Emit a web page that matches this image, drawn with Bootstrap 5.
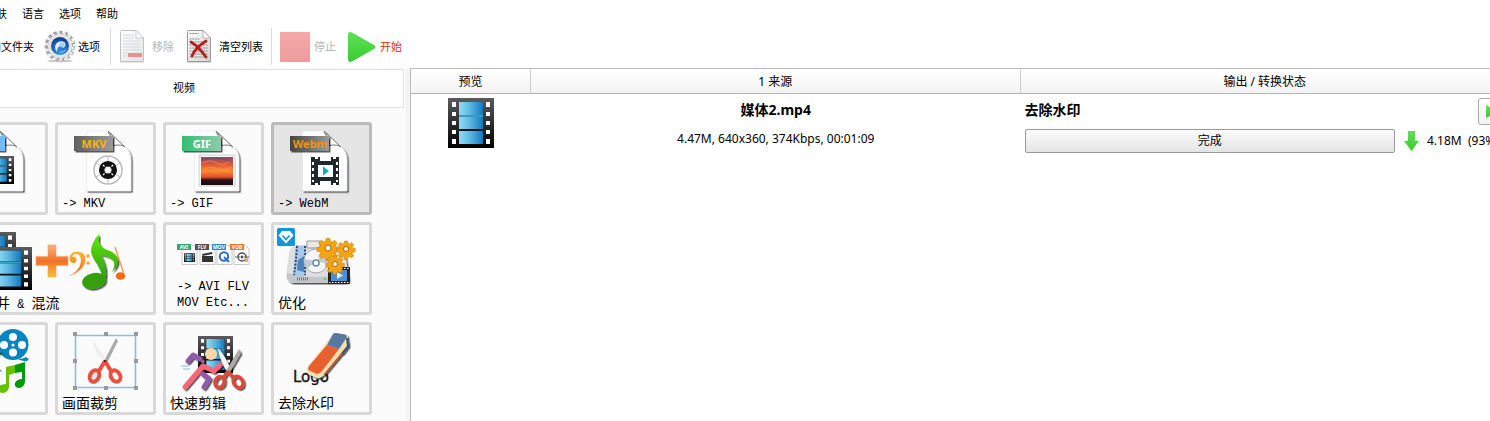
<!DOCTYPE html>
<html lang="zh-CN">
<head>
<meta charset="utf-8">
<meta name="viewport" content="width=device-width, initial-scale=1">
<title>视频转换</title>
<link rel="stylesheet" href="https://cdn.jsdelivr.net/npm/bootstrap@5.3.0/dist/css/bootstrap.min.css">
<style>
body{font-family:"Noto Sans","Noto Sans CJK SC",sans-serif;font-size:12px;line-height:16px;color:#000;background:#fff}
.app-menu{height:28px;margin-left:-15px;gap:15px;font-size:11px}
.app-menu a{color:#000;text-decoration:none}
.toolbar{height:40px;margin-left:-21px;font-size:11px;padding-bottom:3px}
.toolbar button{border:0;background:none;padding:0;display:flex;align-items:center;gap:4px;color:#000;white-space:nowrap}
.toolbar button:disabled{color:#b4b4b4}
.toolbar .settings{gap:2px;margin:0 2px 0 10px}
.toolbar .page-tool{gap:7px}
.toolbar .start{color:#dc2b14}
.tool-sep{width:1px;height:37px;background:#dcdcdc}
.side{width:406px;background:#fbfbfb;overflow:hidden}
.tab-strip{height:39px;margin:1px 2px 0 -36px;border:1px solid #e0e0e0;background:#fff;font-size:11px;padding-bottom:1px}
.tab-strip a{color:#000;text-decoration:none}
.splitter{width:4px;background:#f3f3f3}
.tiles{display:grid;grid-template-columns:repeat(4,101px);grid-auto-rows:93px;gap:7px;justify-content:end;padding:14px 34px 0 0}
.tile{border:3px solid #d8d8d8;border-radius:3px;background:#fbfbfb;padding:0;display:flex;flex-direction:column;text-align:left;color:#000;overflow:hidden}
.tile.active{background:#e5e5e5;border-color:#bbb}
.tile.wide{grid-column:span 2}
.tile svg{flex:none;width:95px;height:70px}
.tile.wide svg{width:203px}
.tile.tall-label svg{height:54px}
.tile-label{font:14px/14px "Noto Sans CJK SC",sans-serif;padding-left:4px;white-space:nowrap}
.latin{font-family:"Liberation Mono",monospace;font-size:12px;white-space:pre}
.tile-label.latin{line-height:18px}
.tall-label .tile-label{padding-left:11px;line-height:16px}
.list-pane{border-left:1px solid #bbb;border-top:1px solid #bbb;overflow:hidden;min-width:0}
.jobs{width:calc(100% + 20px);table-layout:fixed;border-collapse:separate;border-spacing:0}
.jobs th{height:25px;padding:2px 0 0;font-weight:400;text-align:center;background:linear-gradient(#fff,#f3f3f3);border-bottom:1px solid #b4b4b4;border-right:1px solid #ccc}
.jobs td{padding:4px;vertical-align:top}
.jobs .preview-col{width:120px}
.job-name{font-size:14px;font-weight:700;line-height:24px}
.job-line{height:28px;margin-top:3px}
.status-btn{height:24px;border:1px solid #9a9a9a;border-radius:2px;background:linear-gradient(#fcfcfc,#e4e4e4);padding:0}
.play-btn{width:28px;height:27px;border:1px solid #aaa;border-radius:3px;background:linear-gradient(#fff,#f3f3f3);padding:0 6px;display:flex;align-items:center}
.job-size{width:86px;white-space:pre;padding-left:7px}
</style>
</head>
<body class="vh-100 overflow-hidden d-flex flex-column">
<svg width="0" height="0" class="position-absolute" aria-hidden="true">
<defs>
<linearGradient id="dark" x2="0" y2="1"><stop stop-color="#5b5b5d"/><stop offset="1" stop-color="#000"/></linearGradient>
<linearGradient id="sky"><stop stop-color="#91dcf5"/><stop offset=".45" stop-color="#5eb8e2"/><stop offset="1" stop-color="#1478b9"/></linearGradient>
<linearGradient id="gray"><stop stop-color="#606060"/><stop offset="1" stop-color="#9a9a9a"/></linearGradient>
<linearGradient id="coal"><stop stop-color="#444"/><stop offset="1" stop-color="#999"/></linearGradient>
<linearGradient id="mint"><stop stop-color="#32be72"/><stop offset="1" stop-color="#8ecbab"/></linearGradient>
<linearGradient id="lightblue"><stop stop-color="#3f93df"/><stop offset="1" stop-color="#7dbdf5"/></linearGradient>
<linearGradient id="sunset" x2="0" y2="1"><stop stop-color="#8b4b62"/><stop offset=".25" stop-color="#d9563a"/><stop offset=".5" stop-color="#ff8a32"/><stop offset=".72" stop-color="#d9502d"/><stop offset=".82" stop-color="#2b1116"/><stop offset="1" stop-color="#150d12"/></linearGradient>
<linearGradient id="orange" x2="0" y2="1"><stop stop-color="#f9b27b"/><stop offset=".5" stop-color="#f0712a"/><stop offset="1" stop-color="#ffc02e"/></linearGradient>
<linearGradient id="clef" x2="0" y2="1"><stop stop-color="#fbb63a"/><stop offset="1" stop-color="#fa6210"/></linearGradient>
<linearGradient id="leaf" x2="0" y2="1"><stop stop-color="#5fe70b"/><stop offset="1" stop-color="#2c9b08"/></linearGradient>
<linearGradient id="paper" x2="1" y2="1"><stop stop-color="#fff"/><stop offset="1" stop-color="#d2d2d2"/></linearGradient>
<linearGradient id="go" x2="0" y2="1"><stop stop-color="#5ee05a"/><stop offset="1" stop-color="#3ccc30"/></linearGradient>
<linearGradient id="stopfill" x2="0" y2="1"><stop stop-color="#f7a8a8"/><stop offset="1" stop-color="#eb9c9c"/></linearGradient>
<radialGradient id="orb" cy=".85" r=".8"><stop stop-color="#3b98e4"/><stop offset="1" stop-color="#0a3f93"/></radialGradient>
<filter id="soft" x="-20%" y="-20%" width="150%" height="150%"><feDropShadow dx="1.5" dy="1.5" stdDeviation=".7" flood-opacity=".65"/></filter>
<symbol id="film" viewBox="0 0 46 50" preserveAspectRatio="none">
<path fill="url(#dark)" d="M0 0h46v50H0z"/><path fill="#111" d="M11 4h24v42H11z"/>
<path fill="url(#sky)" d="M11 4h24v13H11zM11 19h24v12H11zM11 33h24v13H11z"/><path fill="#3b9ac2" d="M11 17h24v2H11z"/>
<path fill="#fff" d="M4 4h4v5H4zM4 14h4v4H4zM4 23h4v4H4zM4 32h4v4H4zM4 41h4v5H4zM38 4h4v5h-4zM38 14h4v4h-4zM38 23h4v4h-4zM38 32h4v4h-4zM38 41h4v5h-4z"/>
</symbol>
<symbol id="doc" viewBox="0 0 95 70">
<path filter="url(#soft)" fill="#fff" stroke="#ddd" stroke-width=".5" d="M28.500 6H50l8 8c2 6 5 6 9 8q6 4 6 13v31H28.500z"/>
<path fill="#fff" stroke="#777" d="M50 6l17 16q-3-3-12-1.500Q57 15 50 6z"/><path d="M50 7q5 7 4.500 13" fill="none" stroke="#999"/>
</symbol>
<path id="cog" d="M-2-10h4l.5 3 2 .8 2.400-2 2.900 2.900-2 2.400.8 2 3 .4v4l-3 .5-.8 2 2 2.400-2.900 2.900-2.400-2-2 .8-.5 3h-4l-.5-3-2-.8-2.400 2-2.900-2.900 2-2.400-.8-2-3-.5v-4l3-.5.8-2-2-2.400 2.900-2.900 2.400 2 2-.8z"/>
<symbol id="sheet" viewBox="0 0 26 33"><path fill="#555" opacity=".45" d="M1 30h24v2.500H1z"/>
<path d="M2.500.5H17L24.500 8v22.500q0 1-1 1h-21q-1 0-1-1v-29q0-1 1-1z" fill="url(#paper)" stroke="#999"/><path d="M17 .5V8h7.500z" fill="#fff" stroke="#999" stroke-width=".7"/></symbol>
</defs></svg>

<nav class="app-menu d-flex align-items-center flex-shrink-0">
<a href="#">皮肤</a><a href="#">语言</a><a href="#">选项</a><a href="#">帮助</a>
</nav>

<div class="toolbar d-flex align-items-center flex-shrink-0">
<button type="button">添加文件夹</button>
<button type="button" class="settings">
<svg width="32" height="34" viewBox="-16 -16 32 34"><ellipse cy="15" rx="13" ry="1.500" fill="#ccc"/>
<circle r="12.700" fill="#e4e4e4" stroke="#a2a2a2"/><circle r="14" fill="none" stroke="#a2a2a2" stroke-width="2.600" stroke-dasharray="3.500 2.365"/><circle r="13.200" fill="none" stroke="#ebebeb" stroke-width="2.800" stroke-dasharray="2.300 3.565" stroke-dashoffset="-.6"/>
<circle r="9.500" fill="url(#orb)" stroke="#eee"/><path d="M-3 6C-8 0-2-7 4-4 6-3 6 1 3 2 3-1-3-1-3 6z" fill="#dff2ff"/><circle cx="2" cy="-1" r="2.500" fill="#9fcdf4"/><path d="M-1 6q6 2 8-4-2 3-8 4z" fill="#7cc6f5"/></svg>选项</button>
<span class="tool-sep mx-2"></span>
<button type="button" class="page-tool" disabled>
<svg width="26" height="33" opacity=".6"><use href="#sheet"/><path d="M4 5h10M4 8h10M4 11h17M4 14h17M4 17h17M4 20h17M4 23h6M4 26h4" stroke="#b9c3c9"/><path fill="#dd3636" opacity=".9" d="M9 23h14v4H9z"/></svg>移除</button>
<button type="button" class="page-tool ms-2 ps-1">
<svg width="26" height="33"><use href="#sheet"/><path d="M3.500 3.500h9M3.500 9h10M3.500 12h18M3.500 15h18M3.500 18h18M3.500 21h18M3.500 24h18M3.500 27h18" stroke="#888" stroke-dasharray="2 .7"/><path d="M5 12q7 4 15 15M20 11Q9 18 6 26" stroke="#b61d1d" stroke-width="2.800" stroke-linecap="round" fill="none"/></svg>清空列表</button>
<span class="tool-sep mx-2"></span>
<button type="button" disabled><svg width="30" height="30"><path fill="url(#stopfill)" d="M0 0h30v30H0z"/></svg>停止</button>
<button type="button" class="start ms-2 ps-1"><svg width="28" height="30"><path d="M0 3Q0-1 4 .500L26 13q3 2 0 4L4 29.500Q0 31 0 27z" fill="url(#go)"/></svg>开始</button>
</div>

<main class="d-flex flex-fill">
<aside class="side flex-shrink-0">
<nav class="tab-strip d-flex align-items-center justify-content-center"><a href="#">视频</a></nav>
<div class="tiles">
<button type="button" class="tile"><svg viewBox="0 0 95 70"><use href="#doc" width="95" height="70"/><path filter="url(#soft)" fill="url(#lightblue)" d="M16 11h39v15H16z"/><use href="#film" x="34" y="31" width="30" height="28"/></svg><span class="tile-label">&nbsp;</span></button>
<button type="button" class="tile"><svg viewBox="0 0 95 70"><use href="#doc" width="95" height="70"/><path filter="url(#soft)" fill="url(#gray)" d="M16 11h39v15H16z"/><text x="36" y="22.500" text-anchor="middle" font-family="Noto Sans" font-size="11" font-weight="700" fill="#f8b400">MKV</text>
<circle cx="50" cy="45" r="14" fill="#fff" stroke="#bbb" stroke-width="1.500"/><path d="M50 31v28M38 38l24 14M38 52l24-14" stroke="#bbb"/><circle cx="50" cy="45" r="6.300" fill="none" stroke="#111" stroke-width="5.500"/><circle cx="50" cy="45" r="2.500" fill="#fff"/><path d="M45 40l1.500 1.500M55 40l-1.500 1.500M45 50l1.500-1.500M55 50l-1.500-1.500" stroke="#fff" stroke-width="1.200"/></svg><span class="tile-label latin">-&gt; MKV</span></button>
<button type="button" class="tile"><svg viewBox="0 0 95 70"><use href="#doc" width="95" height="70"/><path filter="url(#soft)" fill="url(#mint)" d="M16 11h39v15H16z"/><text x="36" y="22.500" text-anchor="middle" font-family="Noto Sans" font-size="11" font-weight="700" fill="#fff">GIF</text>
<path d="M33 30h36v31H33z" fill="#f8f8f8" stroke="#ccc"/><path fill="url(#sunset)" d="M35 32h32v28H35z"/><path d="M36 38q9-4 15 0t15-3M38 44q8-3 13 0t15-2" stroke="#ffb04a" fill="none" opacity=".5"/><path d="M35 35q14-4 31 1" stroke="#625077" stroke-width="2" fill="none" opacity=".5"/></svg><span class="tile-label latin">-&gt; GIF</span></button>
<button type="button" class="tile active" aria-pressed="true"><svg viewBox="0 0 95 70"><use href="#doc" width="95" height="70"/><path filter="url(#soft)" fill="url(#coal)" d="M16 11h39v15H16z"/><text x="36" y="22.500" text-anchor="middle" font-family="Noto Sans" font-size="11" font-weight="700" fill="#f5910a">Webm</text>
<path fill="#22272b" d="M37 32h4v2h3v-2h2v4h11v-4h2v2h3v-2h3v28h-3v-2h-3v2h-2v-4H46v4h-2v-2h-3v2h-4z"/><path fill="#f7fbfd" d="M44 40h15v12H44z"/><path fill="#fff" d="M38 37h2v3h-2zM38 43h2v3h-2zM38 49h2v3h-2zM38 55h2v2h-2zM62 37h2v3h-2zM62 43h2v3h-2zM62 49h2v3h-2zM62 55h2v2h-2z"/><path fill="#17a7bf" d="M49 41.500l6 4.500-6 4.500z"/></svg><span class="tile-label latin">-&gt; WebM</span></button>

<button type="button" class="tile wide"><svg viewBox="0 0 203 70"><use href="#film" x="20" y="7" width="46" height="43"/><use href="#film" x="36" y="22" width="46" height="43"/>
<path d="M98 20h8v11.500h12v9h-12V52h-8V40.500H86v-9h12z" fill="url(#orange)" stroke="#f3a16c" stroke-width=".6"/>
<path d="M119 51q11-5 12-15 0-7-5-7-3 0-3.500 3 4-1 4 3 0 3-3 3-4 0-4-5 1-6 7-6.500 9 0 9 8-1 11-16.500 16.500z" fill="url(#clef)"/><circle cx="138" cy="31" r="1.800" fill="#fba427"/><circle cx="138" cy="38" r="1.800" fill="#fba427"/>
<g filter="url(#soft)"><ellipse cx="144" cy="56" rx="12" ry="8" fill="#349f0a" transform="rotate(-12 144 56)"/><path d="M149 9q-8 9-8 18 1 5 6 12 5 8 6 18l3-5q1-12-5-22 7 1 12 5 3 5-1 12 7-6 6-13-3-7-11-9-7-3-8-8 0-4 0-8z" fill="url(#leaf)"/></g>
<path d="M165 22l8 24q1 4-3 7" fill="none" stroke="#f6a050" stroke-width="1.500"/><ellipse cx="170.500" cy="51" rx="4.700" ry="3.800" fill="#fa6a12"/></svg><span class="tile-label">视频合并<span class="latin"> &amp; </span>混流</span></button>
<button type="button" class="tile tall-label"><svg viewBox="0 0 95 54">
<g fill="#fff" stroke="#bbb" stroke-width=".8"><path d="M16 20h11l4 4v15.500H16zM34 20h11l4 4v15.500H34zM51 20h11l4 4v15.500H51zM68 20h11l4 4v15.500H68z"/></g>
<path d="M11 19h14v6H11z" fill="#36a46c"/><path d="M29 19h14v6H29z" fill="#555"/><path d="M46 19h14v6H46z" fill="#3489bf"/><path d="M64 19h14v6H64z" fill="#e5782e"/>
<g font-family="Noto Sans" font-size="5" font-weight="700" fill="#fff" text-anchor="middle"><text x="18" y="23.700">AVI</text><text x="36" y="23.700">FLV</text><text x="53" y="23.700">MOV</text><text x="71" y="23.700">VOB</text></g>
<use href="#film" x="18" y="28" width="11" height="9"/><path d="M36 29l10-2 .5 2-10 2zM36 31h11v6H36z" fill="#333"/><circle cx="58" cy="31.500" r="4.200" fill="#fff" stroke="#2b6fc5" stroke-width="2"/><path d="M58 32l5 5" stroke="#2b6fc5" stroke-width="2"/><circle cx="76" cy="32" r="4" fill="none" stroke="#555" stroke-width="1.500"/><circle cx="76" cy="32" r="1.500" fill="#555"/><path d="M69 32h5M78 32h5" stroke="#666"/><path d="M79 33h3v4h-3z" fill="#dcb270"/></svg><span class="tile-label latin">-&gt; AVI FLV
MOV Etc...</span></button>
<button type="button" class="tile"><svg viewBox="0 0 95 70"><path filter="url(#soft)" d="M22 20h40q8 0 10 14l3 20q0 4-5 4H20q-7 0-8-7l3-22q1-8 7-9z" fill="#dcdee0"/><path d="M13 48q30 8 60 0v7q-2 3-8 3H20q-6 0-7-5z" fill="#c3c6c9"/>
<path d="M33 16h13v7H33z" fill="#e8e8e8" stroke="#999"/><path d="M22 20q7 2 10 0v31H19z" fill="#a8c9ea"/><path d="M23 21q-1 16-3 29M31 21v29" stroke="#334a66" stroke-width="2" stroke-dasharray="2 1.500" fill="none"/><path d="M24 35l6-4v16l-7-2z" fill="#4d83bd"/>
<circle cx="42" cy="36" r="12" fill="#f3f5f6" stroke="#aaa"/><path d="M42 36l9-8q4 5 3 11zM42 36l-9 8q-3-5-3-10z" fill="#c0cbd1"/><circle cx="42" cy="38" r="3" fill="#fff" stroke="#6888a8" stroke-width="1.500"/><path d="M23 54h11" stroke="#777" stroke-width="3" stroke-dasharray="1 1"/><circle cx="51" cy="54" r="1" fill="#63c334"/>
<path d="M54 42h22v17H54z" fill="#24262b"/><path d="M57 45h16v11H57z" fill="#538ece"/><path d="M63 47l6 3.500-6 3.500z" fill="#d8ecff"/><path d="M55 43.500h20M55 57.500h20" stroke="#fff" stroke-dasharray="1.500 1.500"/>
<g fill="#f5a40f" stroke="#b97000" stroke-width=".5"><use href="#cog" transform="translate(54 23) scale(.95)"/><use href="#cog" transform="translate(72 24) scale(.8)"/><use href="#cog" transform="translate(61 39) scale(.8)"/></g><g fill="#eee" stroke="#a96c10"><circle cx="54" cy="23" r="3"/><circle cx="72" cy="24" r="2.500"/><circle cx="61" cy="39" r="2.500"/></g>
<rect x="3" y="3" width="18" height="18" rx="1.500" fill="#1296db"/><path d="M8 6h8l3.500 4.500L12 18.500 4.500 10.500z" fill="#fff"/><path d="M8.500 10.500l3.500 4 3.500-4" fill="none" stroke="#1296db" stroke-width="1.700"/></svg><span class="tile-label">优化</span></button>

<button type="button" class="tile"><svg viewBox="0 0 95 70"><path d="M66 33q6 2 10-1l3 2-2 2q-5 1-11-3z" fill="#0a84c1"/><circle cx="63" cy="19.500" r="15.500" fill="#0a84c1"/><g fill="#fff"><circle cx="63" cy="12" r="4"/><circle cx="63" cy="27.500" r="4"/><circle cx="54" cy="20" r="4"/><circle cx="72" cy="20" r="4"/><circle cx="63" cy="20" r="1.500"/></g><path d="M44 27l10 1-9 6M44 37l8 10-8-4" fill="#19634a"/>
<path d="M56 42l9-2v8l-6 2v12q-1 6-7 6-5-1-4-5 2-4 8-4z" fill="#66c200"/><path d="M65 40l10-3v20q-1 6-7 6-4-1-3-5 2-4 7-4V47l-7 1z" fill="#009a0e"/></svg><span class="tile-label">&nbsp;</span></button>
<button type="button" class="tile"><svg viewBox="0 0 95 70"><path d="M17.500 10.500h60v52h-60z" fill="none" stroke="#8fbbdc" stroke-width="1.600"/><path fill="#999" d="M15 7h4v4h-4zM46 7h4v4h-4zM76 7h4v4h-4zM15 34h4v4h-4zM76 34h4v4h-4zM15 61h4v4h-4zM46 61h4v4h-4zM76 61h4v4h-4z"/>
<path d="M34 14q7 9 14 22h-3Q36 26 34 14z" fill="#eee"/><path d="M58 13l2 3-10 20h-4z" fill="#aaa"/><g fill="#e3e3e3" stroke="#e9503f" stroke-width="4"><ellipse cx="36.500" cy="51" rx="4.500" ry="6" transform="rotate(25 36.500 51)"/><ellipse cx="57.500" cy="51" rx="4.500" ry="6" fill="#fbfbfb" transform="rotate(-30 57.500 51)"/></g><path d="M47 36l-6 10M47 36l6 10" stroke="#e9503f" stroke-width="4"/><circle cx="47" cy="36" r="1" fill="#111"/></svg><span class="tile-label">画面裁剪</span></button>
<button type="button" class="tile"><svg viewBox="0 0 95 70"><use href="#film" x="32" y="11" width="35" height="37"/><g fill="none" stroke-linejoin="round" stroke-linecap="round" filter="url(#soft)"><path d="M22 36l5-6 7 4M37 49l6 5-5 8" stroke="#9259aa" stroke-width="5"/><path d="M19 62l18-21 11 5 6-6" stroke="#fb6578" stroke-width="5"/></g><path d="M15 41h8M17 44h7" stroke="#acd3e5" stroke-width="1.500"/><circle cx="45" cy="29" r="6" fill="#fed7a4"/>
<g filter="url(#soft)"><path d="M52 23q8 9 13 22l-4 2Q53 34 52 23z" fill="#f4f4f4"/><path d="M73 24l2 4-12 21-3-3z" fill="#aaa"/><g fill="none" stroke="#dc4938" stroke-width="3.500"><ellipse cx="53.500" cy="57" rx="4.500" ry="5.500" transform="rotate(20 53.500 57)"/><ellipse cx="72" cy="57" rx="4.500" ry="6" transform="rotate(-30 72 57)"/><path d="M62 46l-5 7M62 46l6 8"/></g></g></svg><span class="tile-label">快速剪辑</span></button>
<button type="button" class="tile"><svg viewBox="0 0 95 70"><text x="19" y="57" font-family="DejaVu Sans" font-size="15" fill="#111" stroke="#111" stroke-width=".3">Logo</text><g filter="url(#soft)"><path d="M59 9q1-1 3-1l10 1.500q2 1 2 3V21L50 50q-3 4-7 3l-7-3q-3-1-3-4v-3z" fill="#f4dfb0"/><path d="M53 20L35 41q-2 4 1 5l7 3q3 0 5-3l17-22z" fill="#e8602d"/><path d="M59 9q1-1 3-1l9 1.500q3 1 1 4L65 24l-12-4z" fill="#5678a1"/><path d="M73 13l1 8-24 29" fill="none" stroke="#c95325" stroke-width="1.500"/><path d="M73 13l1 8-6 8" fill="none" stroke="#36587f" stroke-width="2"/></g></svg><span class="tile-label">去除水印</span></button>
</div>
</aside>
<div class="splitter flex-shrink-0"></div>
<section class="list-pane flex-fill">
<table class="jobs">
<thead><tr><th class="preview-col">预览</th><th>1 来源</th><th>输出 / 转换状态</th></tr></thead>
<tbody><tr>
<td class="text-center"><svg class="d-block mx-auto" width="46" height="50"><use href="#film"/></svg></td>
<td class="text-center"><div class="job-name">媒体2.mp4</div><div class="job-line d-flex align-items-center justify-content-center">4.47M, 640x360, 374Kbps, 00:01:09</div></td>
<td><div class="d-flex justify-content-between"><span class="job-name">去除水印</span><button type="button" class="play-btn" aria-label="播放"><svg width="15" height="15"><path d="M1 1l13 6.500L1 14z" fill="url(#go)"/></svg></button></div>
<div class="d-flex align-items-center pt-1"><button type="button" class="status-btn flex-fill">完成</button><svg class="flex-shrink-0 ms-2" width="17" height="20"><path d="M5 0h7v10h4L8.500 20 1 10h4z" fill="url(#go)"/></svg><span class="job-size flex-shrink-0">4.18M  (93%)</span></div></td>
</tr></tbody>
</table>
</section>
</main>
<script src="https://cdn.jsdelivr.net/npm/bootstrap@5.3.0/dist/js/bootstrap.bundle.min.js"></script>
</body>
</html>
